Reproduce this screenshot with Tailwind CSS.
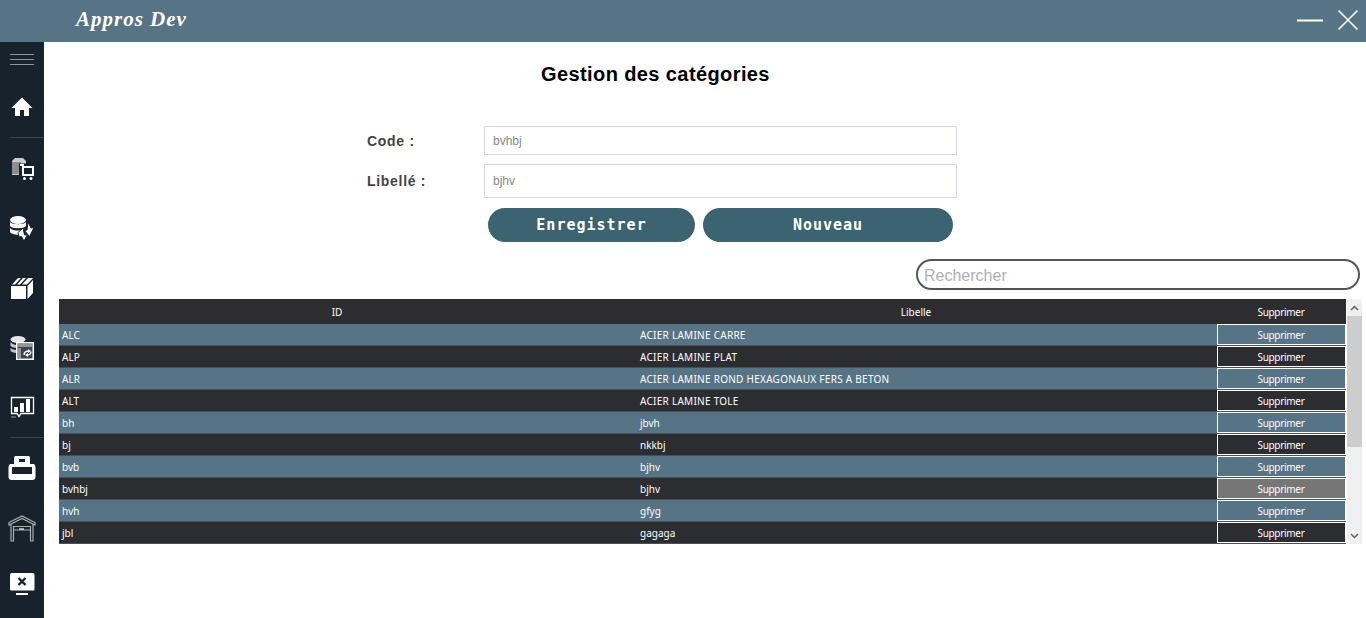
<!DOCTYPE html>
<html lang="fr">
<head>
<meta charset="UTF-8">
<title>Appros Dev</title>
<script src="https://cdn.jsdelivr.net/npm/@tailwindcss/browser@4"></script>
</head>
<body class="h-[618px] w-[1366px] overflow-hidden bg-white font-['Liberation_Sans',sans-serif]">
<!-- title bar -->
<header class="flex h-[42px] items-center justify-between bg-[#567485] pl-[76px] pr-[7px]">
  <span class="pb-[3px] font-['Liberation_Serif',serif] text-[21px] font-bold italic leading-none tracking-[1px] text-white">Appros Dev</span>
  <div class="flex items-center gap-[14px]">
    <svg class="h-[24px] w-[26px]" viewBox="0 0 26 24"><path d="M0 11.500H26" stroke="#fff" stroke-width="2"/></svg>
    <svg class="h-[24px] w-[22px]" viewBox="0 0 22 24"><path d="M1.500 1.500L20.500 20.500M20.500 1.500L1.500 20.500" stroke="#fff" stroke-width="1.600"/></svg>
  </div>
</header>
<div class="flex h-[576px]">
  <!-- sidebar -->
  <aside class="flex w-[44px] shrink-0 flex-col bg-[#17222d]">
    <div class="flex h-[35px] flex-col items-start gap-[4px] pl-[10px] pt-[12px]">
      <div class="h-px w-[24px] bg-[#8f979e]"></div>
      <div class="h-px w-[24px] bg-[#8f979e]"></div>
      <div class="h-px w-[24px] bg-[#8f979e]"></div>
    </div>
    <div class="flex h-[60px] items-center justify-center">
      <svg class="h-[24px] w-[24px]" viewBox="0 0 24 24"><path fill="#fff" d="M12 2.500L1.500 13H5V21H10V15H14V21H19V13H22.500Z"/></svg>
    </div>
    <div class="ml-[10px] h-px bg-[#3a444e]"></div>
    <div class="flex h-[60px] items-center justify-center">
      <svg class="h-[26px] w-[26px]" viewBox="0 0 26 26"><path fill="#c8cacb" d="M3 6L6 3H14L17 6V20H3Z"/><path fill="#8a8e90" d="M3 7H12V19H3Z"/><path fill="#17222d" d="M10 8.500H25V22H10Z"/><path fill="none" stroke="#fff" stroke-width="2" d="M11 10H14V20H24V12H14"/><circle cx="15.500" cy="23.500" r="1.500" fill="#fff"/><circle cx="22" cy="23.500" r="1.500" fill="#fff"/></svg>
    </div>
    <div class="flex h-[60px] items-center justify-center">
      <svg class="h-[26px] w-[26px]" viewBox="0 0 26 26"><ellipse cx="9" cy="5" rx="8" ry="4" fill="#fff"/><path fill="#fff" d="M1 7C3 10 15 10 17 7V11C15 14 3 14 1 11ZM1 13C3 16 11 16 14 15L12 20C7 20 2 19 1 17Z"/><path fill="#fff" stroke="#17222d" d="M19 7L22 13L25 12.500L20.500 21.500L15.500 15.500L18 15ZM9 17.500L14 13L15.500 20L18.500 19.500L15 26L12.500 21.500L10 22Z"/></svg>
    </div>
    <div class="flex h-[60px] items-center justify-center">
      <svg class="h-[26px] w-[26px]" viewBox="0 0 26 26"><path fill="#fff" d="M2 11H17V24H2ZM18.500 11L24 5V18L18.500 24ZM3 9.500L9 3H12L6 9.500ZM8 9.500L14 3H17L11 9.500ZM13 9.500L19 3H24L18 9.500Z"/></svg>
    </div>
    <div class="flex h-[59px] items-center justify-center">
      <svg class="h-[26px] w-[26px]" viewBox="0 0 26 26"><ellipse cx="9" cy="4.500" rx="7.500" ry="3.500" fill="#e8e8e8"/><path fill="#c4c6c8" d="M1.500 7C4 10 8 10 8 10V13C5 13 3 12 1.500 11ZM1.500 13C3 14 5 15 8 15V18C5 18 3 17 1.500 16Z"/><path fill="#3a444e" stroke="#fff" stroke-width="1.500" d="M7.750 7.750H24.250V24.250H7.750Z"/><path fill="#8f979e" d="M9 9H23V12H9ZM9 13H12V23H9Z"/><path fill="none" stroke="#fff" stroke-width="1.300" d="M15 20C15 17 17 16 20 16M18 20C20 20 22 19 22 16.500"/><path fill="#fff" d="M19 14L22 16L19 18ZM19 18L16 20L19 22Z"/></svg>
    </div>
    <div class="flex h-[60px] items-center justify-center">
      <svg class="h-[26px] w-[26px]" viewBox="0 0 26 26"><path fill="none" stroke="#fff" stroke-width="1.300" d="M2.500 3.500H24.500V19.500H12L10 22.500L8 19.500H2.500Z"/><path fill="#fff" d="M5 13H9V18H5ZM11 9H15V18H11ZM17 5H21V18H17Z"/><path d="M2 23H7" stroke="#8f979e"/></svg>
    </div>
    <div class="ml-[10px] h-px bg-[#3a444e]"></div>
    <div class="flex h-[60px] items-center justify-center">
      <svg class="h-[28px] w-[28px]" viewBox="0 0 28 28"><path fill="#fff" d="M6 4C6 2.500 7 2 8 2H20C21 2 22 2.500 22 4V10H26C27 11 27.500 12 27.500 13V23C27.500 25 26 26 25 26H3C2 26 .5 25 .5 23V13C.5 12 1 11 2 10H6Z"/><path fill="#17222d" d="M11 5H17V8H11ZM4 13H24V20H4Z"/></svg>
    </div>
    <div class="flex h-[60px] items-center justify-center">
      <svg class="h-[28px] w-[28px]" viewBox="0 0 28 28" fill="none" stroke="#a9adb1" stroke-width="1.200"><path d="M1 8.500L14 2L27 8.500V11L14 4.500L1 11Z"/><path d="M3 10V27H5.500V12M25 10V27H22.500V12M6 12.500H22M6 16H22"/><path d="M11 15H16" stroke="#fff"/></svg>
    </div>
    <div class="flex h-[54px] items-center justify-center">
      <svg class="h-[26px] w-[26px]" viewBox="0 0 26 26"><path fill="#fff" d="M1 3C1 2 1.500 1 3 1H24C25 1 25.500 2 25.500 3V17C25.500 18 25 18.500 24 18.500H3C1.500 18.500 1 18 1 17Z"/><path d="M9.500 6L16.500 13M16.500 6L9.500 13" stroke="#17222d" stroke-width="2.400"/><path d="M7 22H19" stroke="#fff" stroke-width="2"/></svg>
    </div>
  </aside>
  <!-- main -->
  <main class="flex-1 text-black">
    <h1 class="pl-[497px] pt-[18px] text-[20px] font-bold leading-[28px] tracking-[0.4px]">Gestion des catégories</h1>
    <div class="mt-[38px] flex h-[29px] items-center pl-[323px]">
      <label class="w-[117px] pt-[2px] text-[14px] font-bold tracking-[0.7px] text-[#444]">Code :</label>
      <input value="bvhbj" class="h-[29px] w-[473px] border border-[#d5d9df] px-[8px] text-[12px] text-[#888]">
    </div>
    <div class="mt-[9px] flex h-[34px] items-center pl-[323px]">
      <label class="w-[117px] text-[14px] font-bold tracking-[0.7px] text-[#444]">Libellé :</label>
      <input value="bjhv" class="h-[34px] w-[473px] border border-[#d5d9df] px-[8px] text-[12px] text-[#888]">
    </div>
    <div class="mt-[10px] flex gap-[8px] pl-[444px]">
      <button class="h-[34px] w-[207px] rounded-full bg-[#3b6370] font-['DejaVu_Sans_Mono',monospace] text-[15px] font-bold tracking-[1px] text-white">Enregistrer</button>
      <button class="h-[34px] w-[250px] rounded-full bg-[#3b6370] font-['DejaVu_Sans_Mono',monospace] text-[15px] font-bold tracking-[1px] text-white">Nouveau</button>
    </div>
    <div class="mt-[17px] flex justify-end pr-[6px]">
      <input placeholder="Rechercher" class="h-[31px] w-[444px] rounded-full border-2 border-[#555] pl-[6px] pt-[2px] text-[16px] placeholder:text-[#b0b0b0]">
    </div>
    <!-- table -->
    <div class="ml-[15px] mt-[9px] flex w-[1303px] font-['Noto_Sans',sans-serif] text-[10px] text-white">
      <div class="w-[1287px]">
        <div class="grid h-[25px] grid-cols-[556px_602px_129px] items-center bg-[#2d2d30] text-center">
          <span class="pt-[2px]">ID</span><span class="pt-[2px]">Libelle</span><span class="pt-[2px] pr-px tracking-[-0.3px]">Supprimer</span>
        </div>
        <div class="grid h-[22px] grid-cols-[556px_602px_129px] items-center border-b border-[#45505a] bg-[#567485]"><span class="pl-[3px] pt-[2px]">ALC</span><span class="pl-[25px] pt-[2px] tracking-[0.27px]">ACIER LAMINE CARRE</span><span class="flex h-[21px] items-center justify-center border border-white pr-px pt-[2px] tracking-[-0.3px]">Supprimer</span></div>
        <div class="grid h-[22px] grid-cols-[556px_602px_129px] items-center border-b border-[#45505a] bg-[#2b2d31]"><span class="pl-[3px] pt-[2px]">ALP</span><span class="pl-[25px] pt-[2px] tracking-[0.27px]">ACIER LAMINE PLAT</span><span class="flex h-[21px] items-center justify-center border border-white pr-px pt-[2px] tracking-[-0.3px]">Supprimer</span></div>
        <div class="grid h-[22px] grid-cols-[556px_602px_129px] items-center border-b border-[#45505a] bg-[#567485]"><span class="pl-[3px] pt-[2px]">ALR</span><span class="pl-[25px] pt-[2px] tracking-[0.27px]">ACIER LAMINE ROND HEXAGONAUX FERS A BETON</span><span class="flex h-[21px] items-center justify-center border border-white pr-px pt-[2px] tracking-[-0.3px]">Supprimer</span></div>
        <div class="grid h-[22px] grid-cols-[556px_602px_129px] items-center border-b border-[#45505a] bg-[#2b2d31]"><span class="pl-[3px] pt-[2px]">ALT</span><span class="pl-[25px] pt-[2px] tracking-[0.27px]">ACIER LAMINE TOLE</span><span class="flex h-[21px] items-center justify-center border border-white pr-px pt-[2px] tracking-[-0.3px]">Supprimer</span></div>
        <div class="grid h-[22px] grid-cols-[556px_602px_129px] items-center border-b border-[#45505a] bg-[#567485]"><span class="pl-[3px] pt-[2px]">bh</span><span class="pl-[25px] pt-[2px]">jbvh</span><span class="flex h-[21px] items-center justify-center border border-white pr-px pt-[2px] tracking-[-0.3px]">Supprimer</span></div>
        <div class="grid h-[22px] grid-cols-[556px_602px_129px] items-center border-b border-[#45505a] bg-[#2b2d31]"><span class="pl-[3px] pt-[2px]">bj</span><span class="pl-[25px] pt-[2px]">nkkbj</span><span class="flex h-[21px] items-center justify-center border border-white pr-px pt-[2px] tracking-[-0.3px]">Supprimer</span></div>
        <div class="grid h-[22px] grid-cols-[556px_602px_129px] items-center border-b border-[#45505a] bg-[#567485]"><span class="pl-[3px] pt-[2px]">bvb</span><span class="pl-[25px] pt-[2px]">bjhv</span><span class="flex h-[21px] items-center justify-center border border-white pr-px pt-[2px] tracking-[-0.3px]">Supprimer</span></div>
        <div class="grid h-[22px] grid-cols-[556px_602px_129px] items-center border-b border-[#45505a] bg-[#2b2d31]"><span class="pl-[3px] pt-[2px]">bvhbj</span><span class="pl-[25px] pt-[2px]">bjhv</span><span class="flex h-[21px] items-center justify-center border border-white bg-[#767676] pr-px pt-[2px] tracking-[-0.3px]">Supprimer</span></div>
        <div class="grid h-[22px] grid-cols-[556px_602px_129px] items-center border-b border-[#45505a] bg-[#567485]"><span class="pl-[3px] pt-[2px]">hvh</span><span class="pl-[25px] pt-[2px]">gfyg</span><span class="flex h-[21px] items-center justify-center border border-white pr-px pt-[2px] tracking-[-0.3px]">Supprimer</span></div>
        <div class="grid h-[22px] grid-cols-[556px_602px_129px] items-center border-b border-[#45505a] bg-[#2b2d31]"><span class="pl-[3px] pt-[2px]">jbl</span><span class="pl-[25px] pt-[2px]">gagaga</span><span class="flex h-[21px] items-center justify-center border border-white pr-px pt-[2px] tracking-[-0.3px]">Supprimer</span></div>
      </div>
      <!-- scrollbar -->
      <div class="ml-px flex h-[245px] w-[15px] flex-col bg-[#f0f0f0]">
        <div class="flex h-[17px] items-center justify-center">
          <svg class="h-[6px] w-[9px]" viewBox="0 0 9 6"><path d="M1 5L4.500 1.500L8 5" fill="none" stroke="#606060" stroke-width="1.500"/></svg>
        </div>
        <div class="h-[131px] bg-[#cdcdcd]"></div>
        <div class="flex flex-1 items-end justify-center pb-[5px]">
          <svg class="h-[6px] w-[9px]" viewBox="0 0 9 6"><path d="M1 1L4.500 4.500L8 1" fill="none" stroke="#606060" stroke-width="1.500"/></svg>
        </div>
      </div>
    </div>
  </main>
</div>
</body>
</html>
